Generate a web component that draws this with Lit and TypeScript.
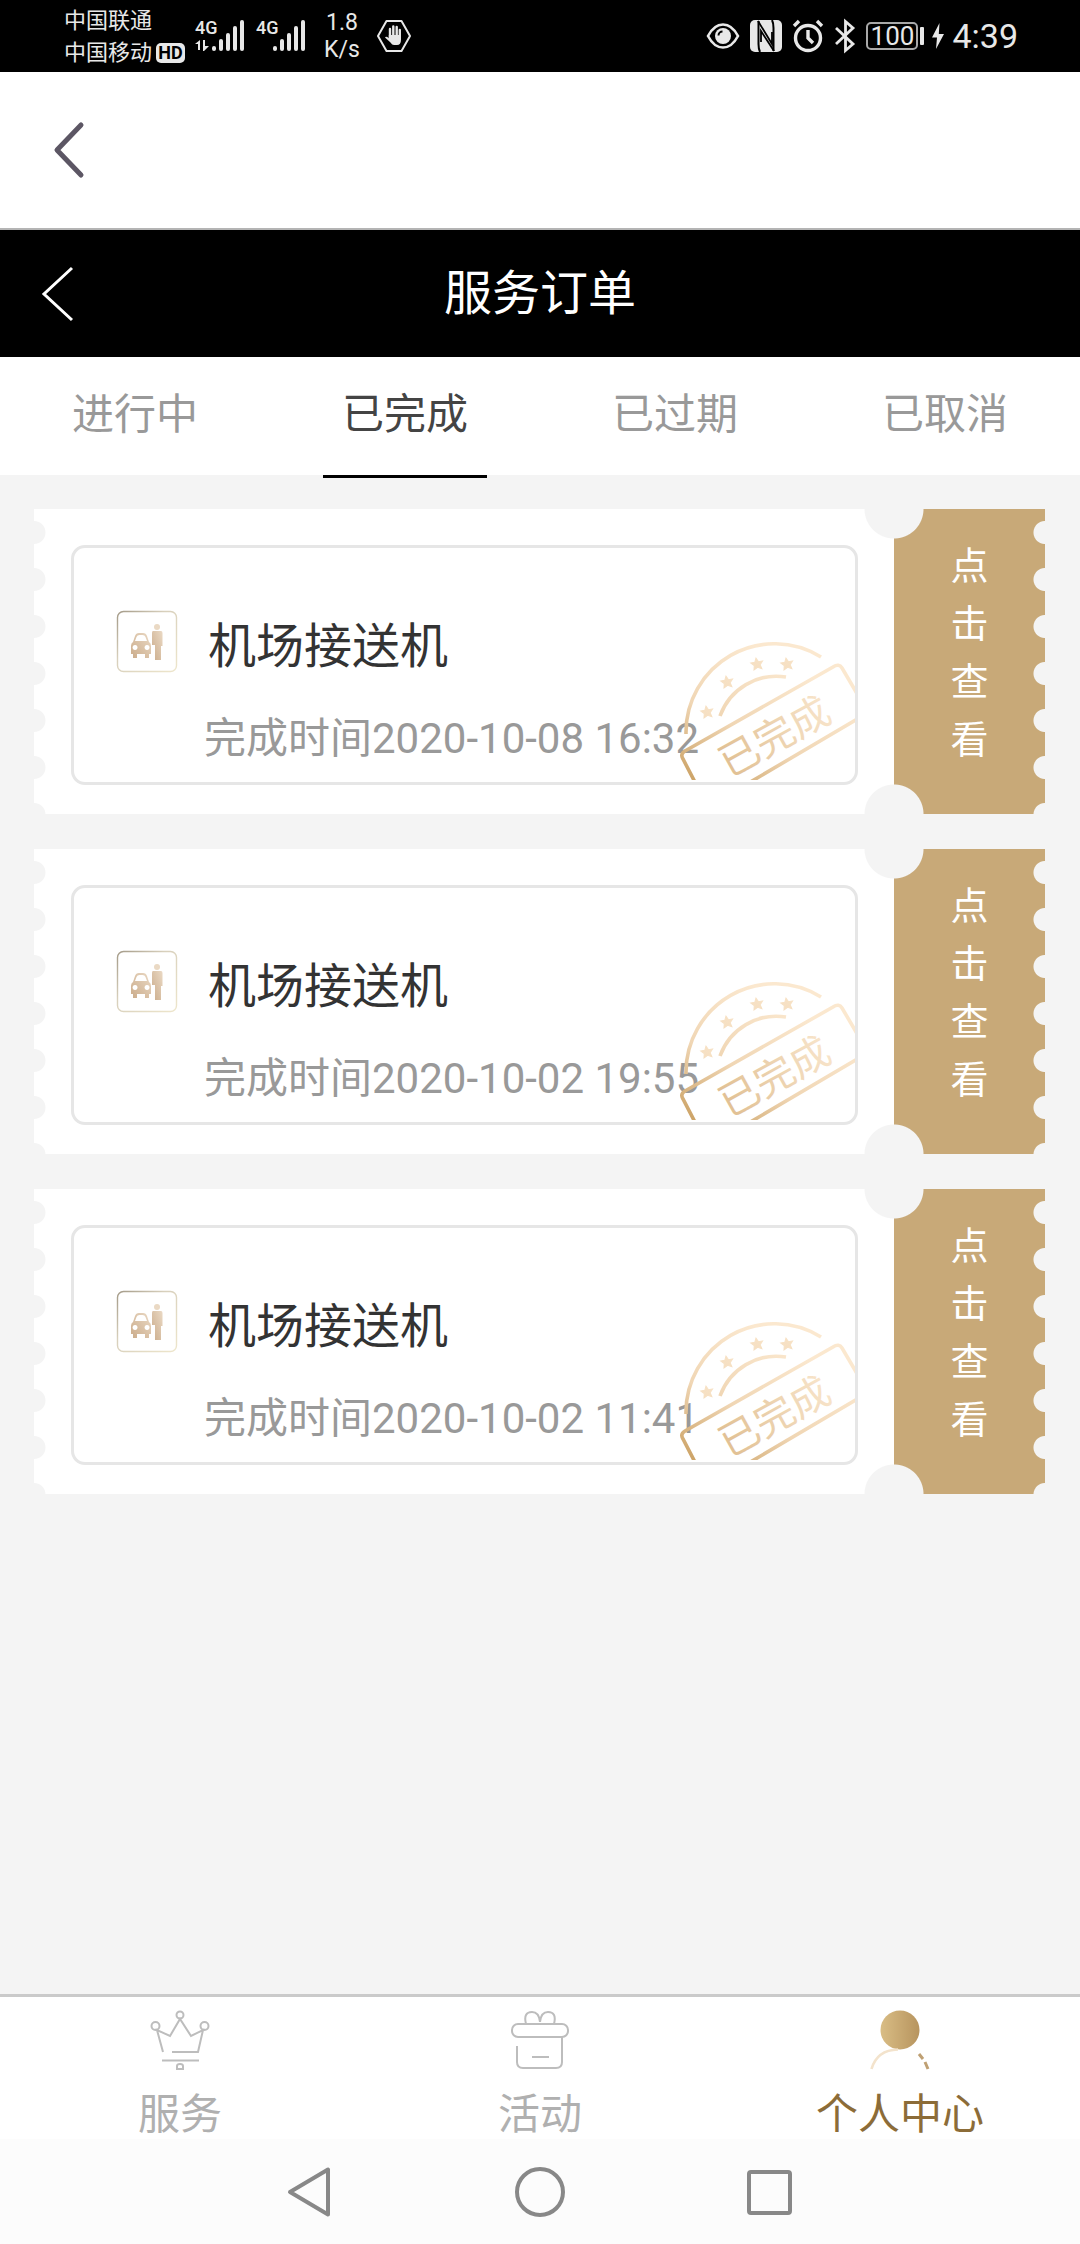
import { LitElement, html, svg, css } from "lit";
import { customElement, property, state } from "lit/decorators.js";
import { classMap } from "lit/directives/class-map.js";

const resets = css`
  * {
    box-sizing: border-box;
  }
  button {
    appearance: none;
    margin: 0;
    padding: 0;
    border: 0;
    background: none;
    color: inherit;
    font: inherit;
    cursor: pointer;
  }
  svg {
    display: block;
    flex: none;
    overflow: visible;
  }
`;

@customElement("status-bar")
export class StatusBar extends LitElement {
  static styles = [
    resets,
    css`
      :host {
        display: flex;
        justify-content: space-between;
        align-items: center;
        height: 72px;
        padding: 0 62px 0 64px;
        background: #000;
        color: #e8e8e8;
      }
      .group {
        display: flex;
        align-items: center;
        gap: 10px;
      }
      .carriers {
        padding-top: 2px;
        font-size: 22px;
        line-height: 32px;
      }
      .carrier {
        display: flex;
        align-items: center;
        gap: 4px;
      }
      .hd {
        width: 29px;
        border-radius: 5px;
        background: #e8e8e8;
        color: #000;
        font-size: 18px;
        font-weight: 700;
        line-height: 20px;
        text-align: center;
      }
      .speed {
        padding: 0 7px;
        font-size: 23px;
        line-height: 27px;
        text-align: center;
      }
      .power {
        display: flex;
        align-items: center;
        gap: 8px;
      }
      .battery {
        display: flex;
        align-items: center;
        gap: 2px;
      }
      .level {
        width: 52px;
        border: 2px solid #a8a8a8;
        border-radius: 5px;
        font-size: 26px;
        line-height: 24px;
        text-align: center;
      }
      .tip {
        width: 4px;
        height: 18px;
        border-radius: 1px;
        background: #e8e8e8;
      }
      .clock {
        font-size: 34px;
        line-height: 40px;
      }
    `,
  ];

  private signal(data: boolean) {
    return html`<svg width="51" height="32" viewBox="0 0 51 32" fill="#e8e8e8" aria-hidden="true">
      <text x="0" y="14" font-size="18" font-weight="500">4G</text>
      ${data
        ? svg`<path d="M0 24 5 20v10H3v-6zM8 20h2v6h4l-5 5H8z" />`
        : ""}
      <rect x="17" y="26" width="4" height="5" rx="2" />
      <rect x="24" y="19" width="4" height="12" rx="2" />
      <rect x="31" y="13" width="4" height="18" rx="2" />
      <rect x="38" y="6" width="4" height="25" rx="2" />
      <rect x="45" y="0" width="4" height="31" rx="2" />
    </svg>`;
  }

  render() {
    return html`
      <div class="group">
        <div class="carriers">
          <div class="carrier">中国联通</div>
          <div class="carrier">中国移动<span class="hd">HD</span></div>
        </div>
        ${this.signal(true)} ${this.signal(false)}
        <div class="speed">1.8<br />K/s</div>
        <svg width="34" height="34" viewBox="0 0 34 34" aria-hidden="true">
          <path d="M9.500 2h15L33 17l-8.500 15h-15L1 17z" fill="none" stroke="#e8e8e8" stroke-width="2" stroke-linejoin="round" />
          <path
            d="M13 19V10M16.300 17V7.500M19.700 17V8M22.800 18V11"
            stroke="#e8e8e8" stroke-width="2.400" stroke-linecap="round"
          />
          <path d="M11.800 16h12.200v4.500q0 5.500-4 5.500h-3q-2 0-3.500-2.500L8 18.500q1-1.800 3.800.7z" fill="#e8e8e8" />
        </svg>
      </div>
      <div class="group">
        <svg width="34" height="28" viewBox="0 0 34 28" aria-hidden="true">
          <path d="M2 14Q8 2.500 17 2.500T32 14Q26 25.500 17 25.500T2 14z" fill="none" stroke="#e8e8e8" stroke-width="2.600" />
          <circle cx="17" cy="14" r="8" fill="#e8e8e8" />
          <path d="M12.500 13.500a4 4 0 0 1 4-4" fill="none" stroke="#000" stroke-width="2" />
        </svg>
        <svg width="32" height="34" viewBox="0 0 32 34" aria-hidden="true">
          <rect x="0" y="1" width="32" height="32" rx="5" fill="#e8e8e8" />
          <path d="M8.500 2v23q0 5 1.500 8M23.500 32V9q0-5-1.500-8" fill="none" stroke="#000" stroke-width="2" />
          <path d="M8 2l14 23V13M24 32 11 12v11" fill="none" stroke="#000" stroke-width="1.800" />
        </svg>
        <svg width="32" height="34" viewBox="0 0 32 34" fill="none" stroke="#e8e8e8" stroke-width="3.400" aria-hidden="true">
          <circle cx="16" cy="19" r="12.500" />
          <path d="M16 11v8l5 5M2 7l5-5M30 7l-5-5" />
        </svg>
        <svg width="22" height="34" viewBox="0 0 22 34" fill="none" stroke="#e8e8e8" stroke-width="2.800" aria-hidden="true">
          <path d="M2 9l17 16-7.500 6.500v-29L19 9 2 25" />
        </svg>
        <div class="power">
          <div class="battery"><span class="level">100</span><span class="tip"></span></div>
          <svg width="12" height="28" viewBox="0 0 12 28" aria-hidden="true">
            <path d="M7.500 1 0 15.500h5L4 27l8-15H6.800z" fill="#e8e8e8" />
          </svg>
          <span class="clock">4:39</span>
        </div>
      </div>
    `;
  }
}

@customElement("order-ticket")
export class OrderTicket extends LitElement {
  @property() name = "";
  @property() time = "";

  static styles = [
    resets,
    css`
      :host {
        display: block;
      }
      .ticket {
        position: relative;
        display: flex;
        background: #fff;
      }
      /* Perforated edges and the two notches on the tear line. */
      .ticket::after {
        content: "";
        position: absolute;
        inset: 0;
        pointer-events: none;
        background:
          radial-gradient(circle at 0 50%, #f4f4f4 11px, transparent 12px) left top / 12px 47px repeat-y,
          radial-gradient(circle at 100% 50%, #f4f4f4 11px, transparent 12px) right top / 12px 47px repeat-y,
          radial-gradient(circle at 50% 0, #f4f4f4 29px, transparent 30px) right 121px top / 60px 30px no-repeat,
          radial-gradient(circle at 50% 100%, #f4f4f4 29px, transparent 30px) right 121px bottom / 60px 30px no-repeat;
      }
      .body {
        flex: 1;
        padding: 36px 36px 29px 37px;
      }
      .frame {
        position: relative;
        display: grid;
        grid-template-columns: 62px 1fr;
        column-gap: 30px;
        align-items: start;
        padding: 63px 42px 13px;
        border: 3px solid #e6e6e6;
        border-radius: 14px;
      }
      .name {
        margin: 0;
        color: #333;
        font-size: 48px;
        font-weight: 400;
        line-height: 72px;
      }
      .time {
        grid-column: 1 / -1;
        margin: 0;
        padding: 26px 0 0 88px;
        color: #999;
        font-size: 42px;
        line-height: 60px;
        white-space: nowrap;
      }
      .stamp {
        position: absolute;
        right: 0;
        bottom: 0;
      }
      .view {
        display: flex;
        flex: none;
        justify-content: center;
        width: 151px;
        padding: 28px 0;
        background: #c8a978;
        color: #fff;
        font-size: 38px;
        line-height: 58px;
      }
      .label {
        width: 38px;
        word-break: break-all;
      }
    `,
  ];

  private stars() {
    const star = "M0-6 1.900-2 6-2 3 1.200 4 5.400 0 3.300-4 5.400-3 1.200-6-2-1.900-2z";
    return [[27, 68], [47, 38], [77, 20], [107, 20]].map(
      ([x, y]) => svg`<path d=${star} fill="url(#gold)" stroke="url(#gold)" transform="translate(${x} ${y}) rotate(-10)" />`
    );
  }

  render() {
    return html`<article class="ticket">
      <div class="body">
        <div class="frame">
          <svg width="62" height="62" viewBox="0 0 62 62" aria-hidden="true">
            <defs>
              <linearGradient id="edge" x1="0" y1="0" x2="1" y2="1">
                <stop offset="0" stop-color="#a39a88" />
                <stop offset=".4" stop-color="#d8d0bc" />
                <stop offset="1" stop-color="#eee6cc" />
              </linearGradient>
              <linearGradient id="pale" x1="0" y1="1" x2="1" y2="0">
                <stop offset="0" stop-color="#cbac8b" />
                <stop offset="1" stop-color="#ead9c4" />
              </linearGradient>
            </defs>
            <rect x="1.500" y=".5" width="59" height="60" rx="6" fill="none" stroke="url(#edge)" stroke-width="1.400" />
            <path
              fill="url(#pale)" fill-rule="evenodd"
              d="M17 31l2-6q1-3 4-3h4q3 0 4 3l2 6q2 1 2 4v8h-2v4h-4v-4h-8v4h-4v-4h-2v-8q0-3 2-4zM19 30h12l-1.500-4q-.7-2-3-2h-3q-2.300 0-3 2zM19 34a2.500 2.500 0 1 0 .1 0zM31 34a2.500 2.500 0 1 0 .1 0z"
            />
            <circle cx="41" cy="16" r="3" fill="#ead9c4" />
            <path d="M37 20h8q1.500 0 1.500 2v13H45v14h-6V34h-3V22q0-2 1-2z" fill="url(#pale)" />
          </svg>
          <h2 class="name">${this.name}</h2>
          <p class="time">完成时间${this.time}</p>
          <svg class="stamp" width="175" height="138" viewBox="0 0 175 138" role="img" aria-label="已完成">
            <defs>
              <linearGradient id="gold" gradientUnits="userSpaceOnUse" x1="20" y1="139" x2="90" y2="10">
                <stop offset="0" stop-color="#cda468" />
                <stop offset=".45" stop-color="#f0d6b4" />
                <stop offset="1" stop-color="#fbe8cf" />
              </linearGradient>
              <linearGradient id="ink" gradientUnits="userSpaceOnUse" x1="0" y1="0" x2="126" y2="0">
                <stop offset="0" stop-color="#e0bf92" />
                <stop offset="1" stop-color="#f9e6cd" />
              </linearGradient>
              <clipPath id="crop"><rect y="-2" width="175" height="138" /></clipPath>
            </defs>
            <g fill="none" stroke="url(#gold)" stroke-width="3.600" clip-path="url(#crop)">
              <path d="M6 90A88.500 88.500 0 0 1 141 13" />
              <path d="M40 72A60 60 0 0 1 106 33" />
              <path d="M17 142 3 115q-3-5 2-8L153 23q6-4 9 1l20 34M67 140 179 74" />
            </g>
            ${this.stars()}
            <text transform="translate(49 134) rotate(-29)" font-size="40" fill="url(#ink)">已完成</text>
          </svg>
        </div>
      </div>
      <button class="view"><span class="label">点击查看</span></button>
    </article>`;
  }
}

@customElement("tab-bar")
export class TabBar extends LitElement {
  static styles = [
    resets,
    css`
      :host {
        display: block;
      }
      .bar {
        display: grid;
        grid-template-columns: repeat(3, 1fr);
        border-top: 3px solid #cacaca;
        background: #fff;
      }
      .item {
        display: flex;
        flex-direction: column;
        align-items: center;
        gap: 20px;
        padding: 13px 0 0;
        color: #b0b0b0;
        font-size: 42px;
        line-height: 49px;
        text-decoration: none;
      }
      .current {
        color: #8c6c38;
      }
    `,
  ];

  render() {
    return html`<nav class="bar">
      <a class="item" href="#service">
        <svg width="60" height="60" viewBox="0 0 60 60" fill="none" stroke="#bdbdbd" stroke-width="2" aria-hidden="true">
          <circle cx="30" cy="5" r="3.500" />
          <circle cx="5.500" cy="16" r="4" />
          <circle cx="54.500" cy="16" r="4" />
          <path d="M13 42 7 20l13 6L30 9l11 17 12-6-5 22H22M12 50.500h37" />
          <path d="M27 59v-3q0-2 3-2t3 2v3z" />
        </svg>
        服务
      </a>
      <a class="item" href="#activity">
        <svg width="60" height="60" viewBox="0 0 60 60" fill="none" stroke="#bdbdbd" stroke-width="2" aria-hidden="true">
          <path d="M16 14q-3-12 6-12 7 0 8 10 1-10 8-10 9 0 6 12" />
          <rect x="2" y="14" width="56" height="13" rx="6" />
          <path d="M7 36v16q0 6 6 6h33q6 0 6-6V27M22 47h17" />
        </svg>
        活动
      </a>
      <a class="item current" href="#me" aria-current="page">
        <svg width="60" height="60" viewBox="0 0 60 60" fill="none" aria-hidden="true">
          <defs>
            <linearGradient id="head" x1="0" x2="1" y1="0" y2="0">
              <stop offset="0" stop-color="#d9bd85" />
              <stop offset="1" stop-color="#b7945e" />
            </linearGradient>
          </defs>
          <circle cx="30" cy="20" r="19.500" fill="url(#head)" />
          <path d="M1.500 59Q7 40 28 39.500" stroke="#f3e3cc" stroke-width="2.600" />
          <path d="M49 44l4 5M55 52l3 7" stroke="#bfa073" stroke-width="3" />
        </svg>
        个人中心
      </a>
    </nav>`;
  }
}

@customElement("system-keys")
export class SystemKeys extends LitElement {
  static styles = [
    resets,
    css`
      :host {
        display: flex;
        justify-content: center;
        gap: 180px;
        padding: 28px 0 27px;
        background: #fcfcfc;
      }
    `,
  ];

  private key(label: string, shape: unknown) {
    return html`<button aria-label=${label}>
      <svg width="50" height="50" viewBox="0 0 50 50" fill="none" stroke="#888" stroke-width="4" stroke-linejoin="round">
        ${shape}
      </svg>
    </button>`;
  }

  render() {
    return [
      this.key("返回", svg`<path d="M43 2.500v45L5 25z" />`),
      this.key("主屏幕", svg`<circle cx="25" cy="25" r="23" />`),
      this.key("最近任务", svg`<rect x="4" y="5" width="41" height="41" rx="2" />`),
    ];
  }
}

const TABS = ["进行中", "已完成", "已过期", "已取消"];
const ORDERS = ["2020-10-08 16:32", "2020-10-02 19:55", "2020-10-02 11:41"];

@customElement("app-root")
export class AppRoot extends LitElement {
  @state() private active = 1;

  static styles = [
    resets,
    css`
      :host {
        display: flex;
        flex-direction: column;
        min-height: 100vh;
        background: #f4f4f4;
        font-family: Roboto, "Noto Sans CJK SC", sans-serif;
      }
      .browser {
        display: flex;
        align-items: center;
        height: 158px;
        padding: 0 53px;
        border-bottom: 2px solid #b4b4b4;
        background: #fff;
      }
      .header {
        display: grid;
        grid-template-columns: 1fr auto 1fr;
        align-items: center;
        height: 127px;
        padding: 0 42px;
        background: #000;
        color: #fff;
      }
      .back {
        justify-self: start;
      }
      .title {
        margin: 0;
        font-size: 48px;
        font-weight: 400;
        line-height: 64px;
      }
      .tabs {
        display: grid;
        grid-template-columns: repeat(4, 1fr);
        height: 118px;
        background: #fff;
      }
      .tab {
        display: flex;
        flex-direction: column;
        align-items: center;
        justify-content: space-between;
        height: 121px;
        padding-top: 26px;
        color: #999;
        font-size: 42px;
        line-height: 64px;
      }
      .tab::after {
        content: "";
        width: 164px;
        height: 3px;
      }
      .selected {
        color: #444;
      }
      .selected::after {
        background: #000;
      }
      .orders {
        display: flex;
        flex: 1;
        flex-direction: column;
        gap: 35px;
        padding: 34px 35px 34px 34px;
      }
    `,
  ];

  render() {
    return html`
      <status-bar></status-bar>
      <div class="browser">
        <button aria-label="后退">
          <svg width="32" height="56" viewBox="0 0 32 56" fill="none" stroke="#5c5664" stroke-width="5" stroke-linecap="round" stroke-linejoin="round">
            <path d="M28 3 4 28l24 25" />
          </svg>
        </button>
      </div>
      <header class="header">
        <button class="back" aria-label="返回">
          <svg width="32" height="54" viewBox="0 0 32 54" fill="none" stroke="#fff" stroke-width="3">
            <path d="M30 1 2 27l28 26" />
          </svg>
        </button>
        <h1 class="title">服务订单</h1>
      </header>
      <div class="tabs" role="tablist">
        ${TABS.map(
          (label, i) => html`<button
            role="tab"
            class=${classMap({ tab: true, selected: i === this.active })}
            aria-selected=${i === this.active}
            @click=${() => (this.active = i)}
          >
            ${label}
          </button>`
        )}
      </div>
      <main class="orders">
        ${ORDERS.map((time) => html`<order-ticket name="机场接送机" .time=${time}></order-ticket>`)}
      </main>
      <tab-bar></tab-bar>
      <system-keys></system-keys>
    `;
  }
}
